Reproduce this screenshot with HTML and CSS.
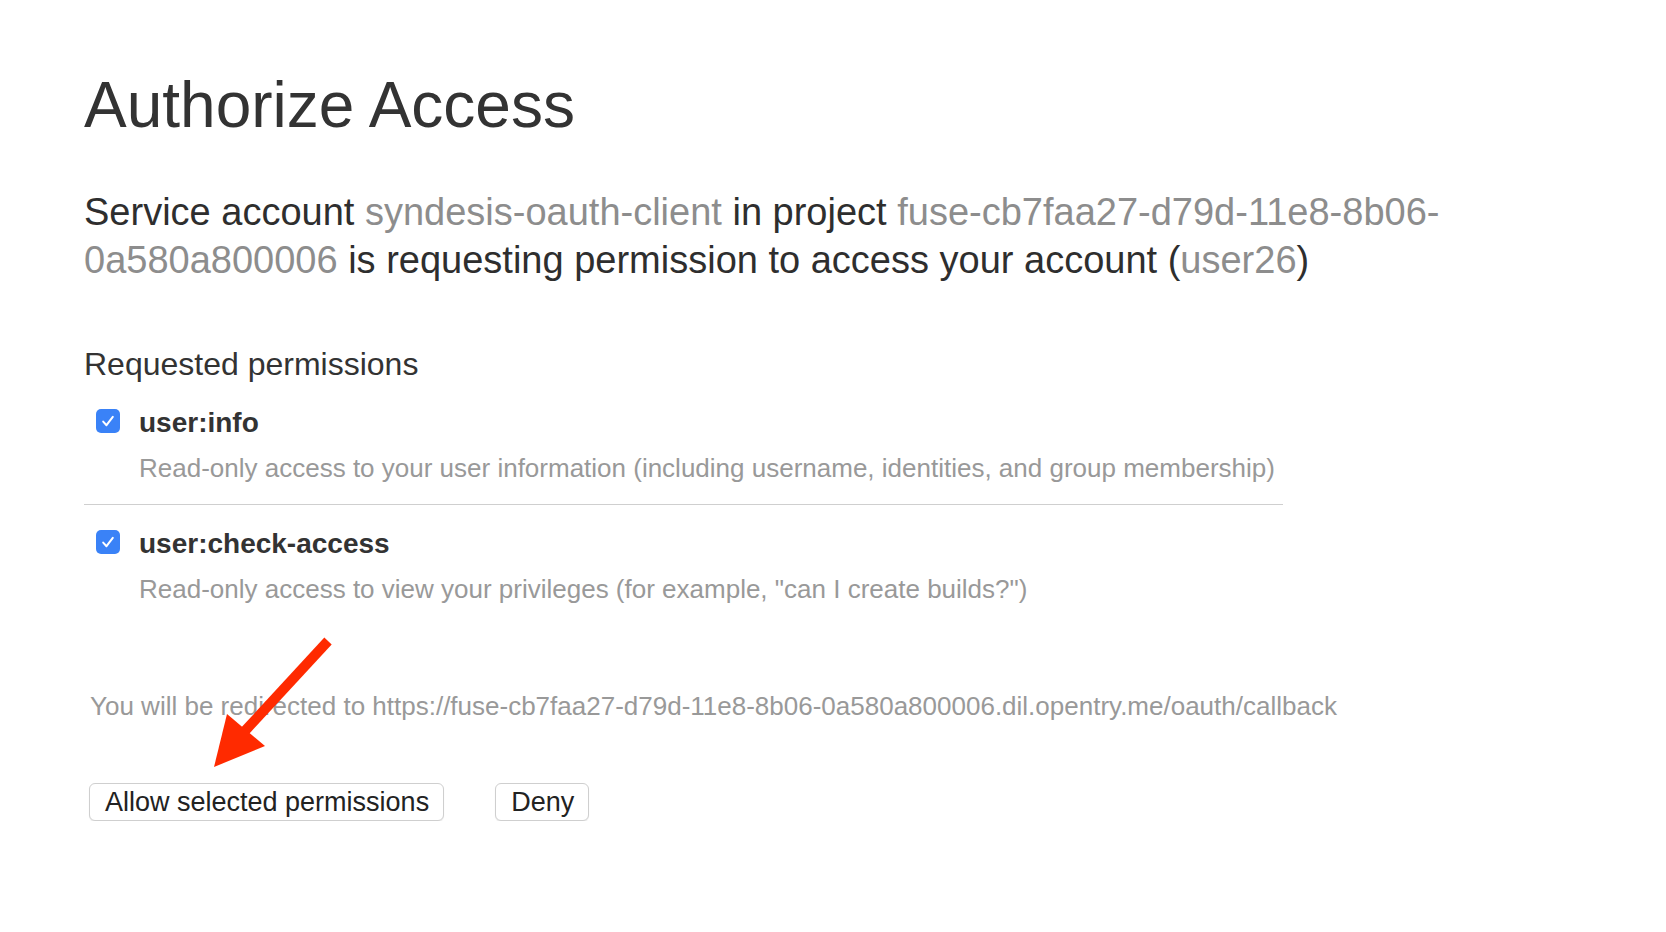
FILE: index.html
```html
<!DOCTYPE html>
<html lang="en">
<head>
<meta charset="utf-8">
<title>Authorize Access</title>
<link rel="stylesheet" href="styles.css">
</head>
<body>
<main class="page">
  <h1 class="title">Authorize Access</h1>
  <p class="intro">Service account <span class="muted">syndesis-oauth-client</span> in project <span class="muted">fuse-cb7faa27-d79d-11e8-8b06-0a580a800006</span> is requesting permission to access your account (<span class="muted">user26</span>)</p>

  <h2 class="perm-heading">Requested permissions</h2>
  <ul class="perm-list">
    <li class="perm">
      <div class="perm-row">
        <svg class="check" width="24" height="24" viewBox="0 0 24 24"><rect x="0" y="0" width="24" height="24" rx="5" fill="#3a82f7"/><path d="M7.2 12.6 L10.5 16.2 L16.8 7.8" fill="none" stroke="#fff" stroke-width="2" stroke-linecap="round" stroke-linejoin="round"/></svg>
        <span class="perm-name">user:info</span>
      </div>
      <div class="perm-desc">Read-only access to your user information (including username, identities, and group membership)</div>
    </li>
    <li class="perm">
      <div class="perm-row">
        <svg class="check" width="24" height="24" viewBox="0 0 24 24"><rect x="0" y="0" width="24" height="24" rx="5" fill="#3a82f7"/><path d="M7.2 12.6 L10.5 16.2 L16.8 7.8" fill="none" stroke="#fff" stroke-width="2" stroke-linecap="round" stroke-linejoin="round"/></svg>
        <span class="perm-name">user:check-access</span>
      </div>
      <div class="perm-desc">Read-only access to view your privileges (for example, "can I create builds?")</div>
    </li>
  </ul>

  <p class="redirect">You will be redirected to https://fuse-cb7faa27-d79d-11e8-8b06-0a580a800006.dil.opentry.me/oauth/callback</p>

  <div class="actions">
    <button class="btn" type="button">Allow selected permissions</button>
    <button class="btn" type="button">Deny</button>
  </div>
</main>

<svg class="annotation" width="1666" height="932" viewBox="0 0 1666 932">
  <line x1="328" y1="641" x2="244" y2="732" stroke="#ff2a00" stroke-width="10"/>
  <polygon points="214,767 227,714 265,746" fill="#ff2a00"/>
</svg>
</body>
</html>
```

FILE: styles.css
```css
html, body {
  margin: 0;
  padding: 0;
  background: #ffffff;
}

body {
  font-family: "Liberation Sans", Arial, Helvetica, sans-serif;
  color: #333333;
}

.page {
  padding: 0 84px;
}

.title {
  margin: 67px 0 0;
  font-size: 64px;
  line-height: 76px;
  font-weight: 400;
  color: #333333;
}

.intro {
  margin: 45px 0 0;
  font-size: 38px;
  line-height: 48px;
  color: #2e2e2e;
}

.muted {
  color: #8d8d8d;
}

.perm-heading {
  margin: 60px 0 0;
  font-size: 32px;
  line-height: 40px;
  font-weight: 400;
  color: #333333;
}

.perm-list {
  list-style: none;
  margin: 0;
  padding: 0;
  width: 1199px;
}

.perm {
  padding: 22px 0 20px;
  border-bottom: 1px solid #cfcfcf;
}

.perm:last-child {
  border-bottom: none;
}

.perm-row {
  display: flex;
  align-items: flex-start;
  gap: 19px;
  padding-left: 12px;
}

.check {
  flex: none;
  margin-top: 3px;
}

.perm-name {
  font-size: 28px;
  line-height: 34px;
  font-weight: 700;
  color: #333333;
}

.perm-desc {
  margin-top: 12px;
  padding-left: 55px;
  font-size: 26px;
  line-height: 32px;
  color: #999999;
}

.redirect {
  margin: 65px 0 0 6px;
  font-size: 26px;
  line-height: 32px;
  color: #999999;
}

.actions {
  display: flex;
  gap: 51px;
  margin: 61px 0 0 5px;
}

.btn {
  height: 38px;
  padding: 0 14px 0 15px;
  font-family: "Liberation Sans", Arial, Helvetica, sans-serif;
  font-size: 27px;
  line-height: 36px;
  color: #222222;
  background: #ffffff;
  border: 1px solid #cfcfcf;
  border-radius: 6px;
  box-shadow: 0 1px 1px rgba(0, 0, 0, 0.08);
}

.annotation {
  position: absolute;
  left: 0;
  top: 0;
  pointer-events: none;
}
```
